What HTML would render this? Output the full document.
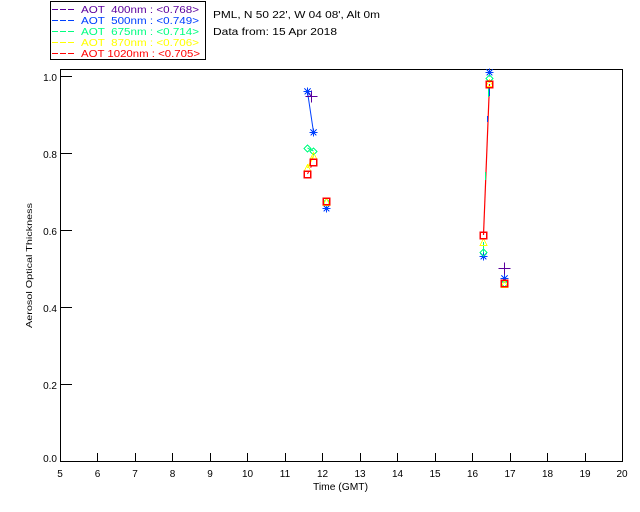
<!DOCTYPE html>
<html><head><meta charset="utf-8"><style>
html,body{margin:0;padding:0;background:#fff;width:640px;height:512px;overflow:hidden}
svg{display:block}
text{font-family:"Liberation Sans",sans-serif;font-size:10px;fill:#000}
.l{shape-rendering:crispEdges}
</style></head><body>
<svg width="640" height="512" viewBox="0 0 640 512" xmlns="http://www.w3.org/2000/svg">
<defs>
<g id="ast" fill="none" stroke-width="1" shape-rendering="crispEdges"><path d="M-3.5 .5H4.5M.5 -3.5V4.5M-2.5 -2.5L3.5 3.5M-2.5 3.5L3.5 -2.5"/></g>
<g id="plus" fill="none" stroke-width="1" shape-rendering="crispEdges"><path d="M-5.5 .5H6.5M.5 -5.5V6.5"/></g>
<g id="dia" fill="none" stroke-width="1" shape-rendering="crispEdges"><path d="M.5 -3L4 .5L.5 4L-3 .5Z"/></g>
<g id="tri" fill="none" stroke-width="1" shape-rendering="crispEdges"><path d="M.5 -3.5L4 3.5H-3Z"/></g>
<g id="sq" fill="none" stroke-width="1.5" shape-rendering="crispEdges"><path d="M-3 -3H3.5V3.5H-3Z"/></g>
</defs>
<rect x="50.5" y="1.5" width="155" height="58" fill="none" stroke="#000" class="l"/>
<g class="l" stroke-dasharray="6 2" fill="none">
<path d="M52 9.5H75" stroke="#5a009c"/><path d="M52 20.5H75" stroke="#0040ff"/><path d="M52 31.5H75" stroke="#00ff80"/><path d="M52 42.5H75" stroke="#ffff00"/><path d="M52 53.5H75" stroke="#ff0000"/>
</g>
<g>
<text x="81" y="13" style="fill:#5a009c" textLength="118" lengthAdjust="spacingAndGlyphs" xml:space="preserve">AOT  400nm : &lt;0.768&gt;</text>
<text x="81" y="24" style="fill:#0040ff" textLength="118" lengthAdjust="spacingAndGlyphs" xml:space="preserve">AOT  500nm : &lt;0.749&gt;</text>
<text x="81" y="35" style="fill:#00ff80" textLength="118" lengthAdjust="spacingAndGlyphs" xml:space="preserve">AOT  675nm : &lt;0.714&gt;</text>
<text x="81" y="46" style="fill:#ffff00" textLength="118" lengthAdjust="spacingAndGlyphs" xml:space="preserve">AOT  870nm : &lt;0.706&gt;</text>
<text x="81" y="57" style="fill:#ff0000" textLength="119" lengthAdjust="spacingAndGlyphs" xml:space="preserve">AOT 1020nm : &lt;0.705&gt;</text>
</g>
<text x="213" y="18" textLength="167" lengthAdjust="spacingAndGlyphs">PML, N 50 22', W 04 08', Alt 0m</text>
<text x="213" y="35" textLength="124" lengthAdjust="spacingAndGlyphs">Data from: 15 Apr 2018</text>

<g class="l" fill="none" stroke="#000">
<path d="M60.5 69.5H622.5V461.5H60.5Z"/>
<path d="M60 76.5H72M60 153.5H72M60 230.5H72M60 307.5H72M60 384.5H72"/>
<path d="M97.5 453V461M135.5 453V461M172.5 453V461M210.5 453V461M247.5 453V461M285.5 453V461M322.5 453V461M360.5 453V461M397.5 453V461M435.5 453V461M472.5 453V461M510.5 453V461M547.5 453V461M585.5 453V461"/>
</g>
<g text-anchor="end">
<text x="57" y="81">1.0</text><text x="57" y="158">0.8</text><text x="57" y="235">0.6</text><text x="57" y="312">0.4</text><text x="57" y="389">0.2</text><text x="57" y="462">0.0</text>
</g>
<g text-anchor="middle">
<text x="60" y="477">5</text><text x="97.5" y="477">6</text><text x="135" y="477">7</text><text x="172.5" y="477">8</text><text x="210" y="477">9</text><text x="247.5" y="477">10</text><text x="285" y="477">11</text><text x="322.5" y="477">12</text><text x="360" y="477">13</text><text x="397.5" y="477">14</text><text x="435" y="477">15</text><text x="472.5" y="477">16</text><text x="510" y="477">17</text><text x="547.5" y="477">18</text><text x="585" y="477">19</text><text x="622" y="477">20</text>
</g>
<text x="313" y="490" textLength="55" lengthAdjust="spacingAndGlyphs">Time (GMT)</text>
<text transform="translate(32,328) rotate(-90)" textLength="125" lengthAdjust="spacingAndGlyphs" style="font-size:8.5px">Aerosol Optical Thickness</text>

<!-- series lines -->
<path d="M307.5 92L311 96" stroke="#5a009c" fill="none"/>
<path d="M307.5 92L313.5 132" stroke="#0040ff" fill="none"/>
<path d="M307.5 148L313.5 151" stroke="#00ff80" fill="none"/>
<path d="M307.5 168L313.5 156" stroke="#ffff00" stroke-width="1.5" fill="none"/>
<path d="M307.5 174L313.5 162" stroke="#ff0000" stroke-dasharray="3 4" fill="none"/>
<path d="M483.5 235L489.5 84" stroke="#ff0000" stroke-width="1.2" fill="none"/>
<path d="M488.5 88V97" stroke="#00ff80" class="l" fill="none"/>
<path d="M489.5 88V96" stroke="#0040ff" class="l" fill="none"/>
<path d="M487.5 116V122" stroke="#0040ff" class="l" fill="none"/>
<path d="M485.5 172V180" stroke="#00ff80" class="l" fill="none"/>
<path d="M483.5 242V256" stroke="#00ff80" class="l" fill="none"/>
<!-- markers -->
<g stroke="#5a009c">
<use href="#plus" x="311" y="96"/><use href="#plus" x="504" y="268"/>
</g>
<g stroke="#0040ff">
<use href="#ast" x="307" y="91"/><use href="#ast" x="313" y="132"/><use href="#ast" x="326" y="208"/><use href="#ast" x="483" y="256"/><use href="#ast" x="489" y="72"/><use href="#ast" x="504" y="278"/>
</g>
<g stroke="#00ff80">
<use href="#dia" x="307" y="148"/><use href="#dia" x="313" y="151"/><use href="#dia" x="326" y="202"/><use href="#dia" x="483" y="252"/><use href="#dia" x="489" y="78"/><use href="#dia" x="504" y="283"/>
</g>
<g stroke="#ffff00">
<use href="#tri" x="313" y="156"/><use href="#tri" x="307" y="168"/><use href="#tri" x="326" y="202"/><use href="#tri" x="483" y="242"/><use href="#tri" x="489" y="83"/><use href="#tri" x="504" y="284"/>
</g>
<g stroke="#ff0000">
<use href="#sq" x="313" y="162"/><use href="#sq" x="307" y="174"/><use href="#sq" x="326" y="201"/><use href="#sq" x="483" y="235"/><use href="#sq" x="489" y="84"/><use href="#sq" x="504" y="283"/>
</g>
</svg>
</body></html>
